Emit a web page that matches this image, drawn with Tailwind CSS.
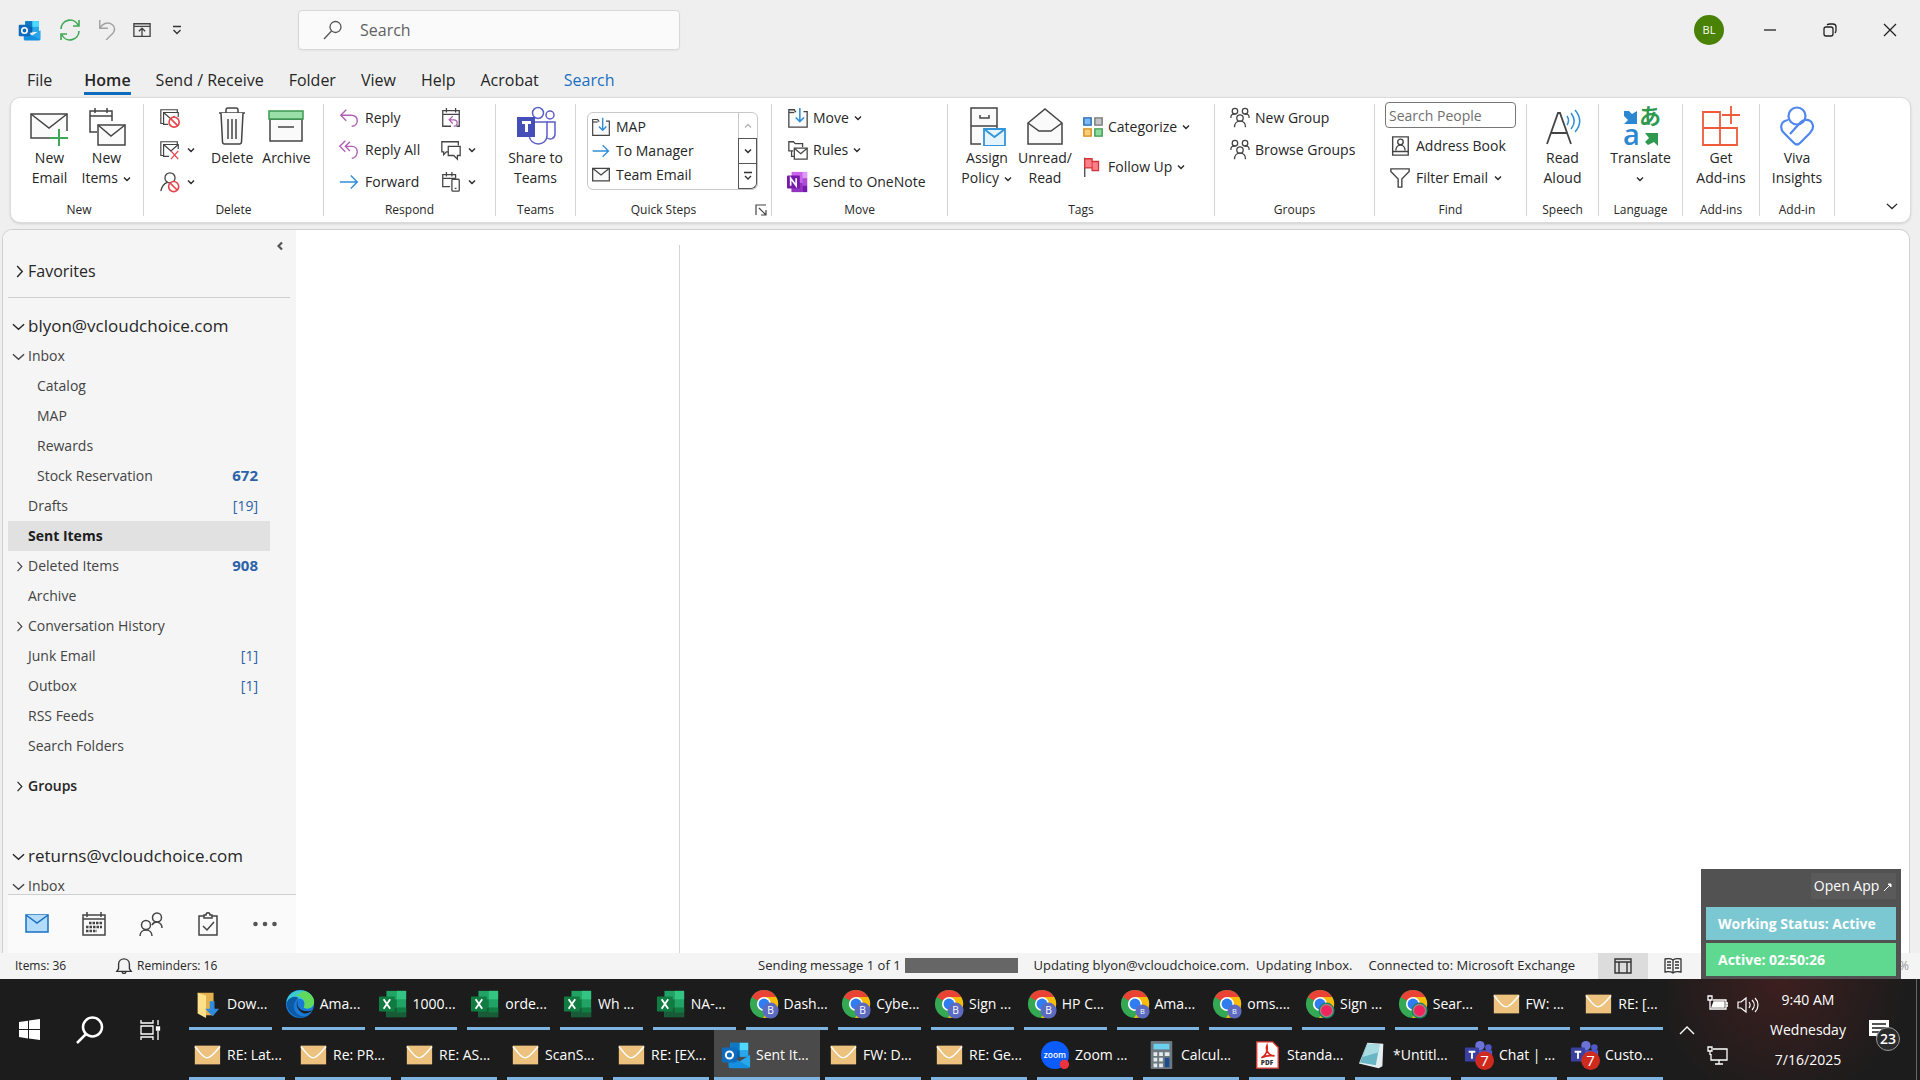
<!DOCTYPE html>
<html lang="en">
<head>
    <meta charset="UTF-8">
    <meta name="viewport" content="width=device-width, initial-scale=1.0">
    <title>Sent Items - Outlook</title>
    <script src="https://cdn.jsdelivr.net/npm/@tailwindcss/browser@4"></script>
</head>
<body class="flex h-screen flex-col overflow-hidden bg-[#efefef] font-['Open_Sans','Noto_Sans',sans-serif] text-sm text-[#262626]">

    <!-- Icon sprite -->
    <svg class="hidden" xmlns="http://www.w3.org/2000/svg">
        <symbol id="chev" viewBox="0 0 10 10" fill="none" stroke="currentColor" stroke-width="1.4"><path d="M2 3.5 5 6.5 8 3.5"/></symbol>
        <symbol id="chevWide" viewBox="0 0 14 14" fill="none" stroke="currentColor" stroke-width="1.5"><path d="M1 4.500 7 10l6-5.500"/></symbol>
        <symbol id="outlook" viewBox="0 0 32 32">
            <path d="M10 3h19v14H10z" fill="#28a8ea"/><path d="M10 3h10v8H10z" fill="#0f78c4"/><path d="M20 3h9v8h-9z" fill="#50d9ff"/><path d="M20 11h9v7h-9z" fill="#28a8ea"/><path d="M10 11h10v8H10z" fill="#0a5fa8"/>
            <path d="M8 16l12 7 11-7v12a2 2 0 0 1-2 2H10a2 2 0 0 1-2-2z" fill="#1490df"/><path d="M20 23l11 6V16z" fill="#28a8ea"/>
            <rect x="1" y="8" width="16" height="16" rx="1.500" fill="#0f6cbd"/><circle cx="9" cy="16" r="3.800" fill="none" stroke="#fff" stroke-width="2.200"/>
        </symbol>
        <symbol id="newmail" viewBox="0 0 40 40" fill="none" stroke="#444" stroke-width="1.500"><path d="M24 32H2V8h36v17" fill="#fafafa"/><path d="M2 8l18 14L38 8"/><path d="M30 23v18M21 32h18" stroke="#3fa856" stroke-width="2"/></symbol>
        <symbol id="newitems" viewBox="0 0 40 40" fill="none" stroke="#444" stroke-width="1.500"><path d="M10 26H3V5h22v10M3 10h22M8 2v5M20 2v5"/><path d="M11 19h27v20H11z" fill="#fafafa"/><path d="M11 19l13 11 14-11"/></symbol>
        <symbol id="ignore" viewBox="0 0 24 24" fill="none" stroke="#444" stroke-width="1.300"><path d="M5 18H2V3h18v3"/><path d="M10 19H5V6h16v5M5 6l8 7 4-3"/><circle cx="16.500" cy="16.500" r="5.500" fill="#fff" stroke="#e5484d" stroke-width="1.800"/><path d="M12.500 12.500l8 8" stroke="#e5484d" stroke-width="1.800"/></symbol>
        <symbol id="junkx" viewBox="0 0 24 24" fill="none" stroke="#444" stroke-width="1.300"><path d="M5 18H2V3h18v3"/><path d="M11 19H5V6h16v5M5 6l8 7 8-7"/><path d="M13 13l8 9M21 13l-8 9" stroke="#e5484d" stroke-width="1.500"/></symbol>
        <symbol id="block" viewBox="0 0 24 24" fill="none" stroke="#444" stroke-width="1.400"><circle cx="12" cy="7.500" r="5.500"/><path d="M2 22c1-5 3-8 7-9.500"/><circle cx="16" cy="17" r="5.500" fill="#fff" stroke="#e5484d" stroke-width="1.800"/><path d="M12 13l8 8" stroke="#e5484d" stroke-width="1.800"/></symbol>
        <symbol id="trash" viewBox="0 0 40 40" fill="none" stroke="#444" stroke-width="1.500"><path d="M7 7h26M14 7V4q0-2 2-2h8q2 0 2 2v3"/><path d="M9 7l1.500 29q.2 2 2 2h15q1.800 0 2-2L31 7" fill="#fafafa"/><path d="M16 13v20M20 13v20M24 13v20"/></symbol>
        <symbol id="archive" viewBox="0 0 40 40" fill="none" stroke="#444" stroke-width="1.500"><path d="M4 13h32v22H4z" fill="#fafafa"/><path d="M3 5h34v8H3z" fill="#9adfa8" stroke="#3c9a50"/><path d="M12 21h16"/></symbol>
        <symbol id="reply" viewBox="0 0 24 24" fill="none" stroke="#b05fb5" stroke-width="1.500"><path d="M9 3 3 9l6 6M3 9h11c5 0 7 3 7 6s-2 6-6 6"/></symbol>
        <symbol id="replyall" viewBox="0 0 24 24" fill="none" stroke="#b05fb5" stroke-width="1.500"><path d="M8 2 2 8l6 6M13 3 8 8l5 5M8 8h7c4 0 6 3 6 6s-2 7-6 7"/></symbol>
        <symbol id="arrow" viewBox="0 0 24 24" fill="none" stroke="#2f8fd8" stroke-width="1.600"><path d="M2 12h19M14 5l7 7-7 7"/></symbol>
        <symbol id="meeting" viewBox="0 0 24 24" fill="none" stroke="#444" stroke-width="1.400"><path d="M12 21H3V4h18v17h-3M3 8h18M7 1v5M17 1v5"/><path d="M14 10l-4 4 4 4M10 14h5c5 0 5 7 0 7" stroke="#b05fb5"/></symbol>
        <symbol id="im" viewBox="0 0 24 24" fill="none" stroke="#444" stroke-width="1.400"><path d="M9 14H7l-3 3v-3H2V3h18v4"/><path d="M9 8h13v10h-3v4l-4-4H9z" fill="#fff"/></symbol>
        <symbol id="share" viewBox="0 0 24 24" fill="none" stroke="#444" stroke-width="1.400"><path d="M11 17H3V4h14v4M3 8h14M7 1v5M13 1v5"/><rect x="13" y="9" width="8" height="13" rx="1" fill="#fff"/><path d="M16 19h2"/></symbol>
        <symbol id="teams" viewBox="0 0 40 40" fill="none" stroke="#5b5fc7" stroke-width="1.500"><circle cx="22" cy="7" r="5.500"/><circle cx="34" cy="9" r="4"/><path d="M14 16h17v13c0 12-17 12-18 0z" fill="#fff"/><path d="M31 16h8v12c0 5-5 6-8 4"/><rect x="1" y="11" width="18" height="20" fill="#464eb8" stroke="none"/><path d="M6 16.500h9M10.500 16v10" stroke="#fff" stroke-width="3"/></symbol>
        <symbol id="moveto" viewBox="0 0 24 24" fill="none" stroke="#444" stroke-width="1.400"><path d="M10 5h-1L8 3H2v19h20V5h-4" fill="#fafafa"/><path d="M2 6h6" /><path d="M14 1v15M9.500 11.500 14 16l4.500-4.500" stroke="#2f8fd8" stroke-width="1.700"/></symbol>
        <symbol id="mail" viewBox="0 0 24 24" fill="none" stroke="#444" stroke-width="1.500"><path d="M2 4h20v15H2z" fill="#fafafa"/><path d="M2 4l10 8 10-8"/></symbol>
        <symbol id="rules" viewBox="0 0 24 24" fill="none" stroke="#444" stroke-width="1.400"><path d="M7 13H2V3h5l2 2h8v4"/><path d="M5 13v6h3M8 10h14v12H8z" fill="#fff"/><path d="M8 10l7 6 7-6"/></symbol>
        <symbol id="onenote" viewBox="0 0 24 24"><path d="M5 1h17v22H5z" fill="#ca64ea"/><path d="M17 1h5v7h-5z" fill="#dc9cf5"/><path d="M17 8h5v8h-5z" fill="#ae4bd5"/><path d="M5 13h12v10H5z" fill="#9332bf"/><path d="M17 16h5v7h-5z" fill="#7719aa"/><rect x="0" y="5" width="14" height="14" rx="1" fill="#7719aa"/><path d="M4 16V8l6 8V8" fill="none" stroke="#fff" stroke-width="1.800"/></symbol>
        <symbol id="policy" viewBox="0 0 40 40" fill="none" stroke="#444" stroke-width="1.500"><path d="M14 38H4V2h26v22M4 20h26M13 9v3h9V9" fill="#fafafa"/><path d="M17 23h21v17H17z" fill="#e5f3fd" stroke="#3394da" stroke-width="1.800"/><path d="M17 23l10.500 8L38 23" stroke="#3394da" stroke-width="1.800"/></symbol>
        <symbol id="unread" viewBox="0 0 40 40" fill="none" stroke="#444" stroke-width="1.500"><path d="M3 17 20 3l17 14v21H3z" fill="#fafafa"/><path d="M3 17l11 8h12l11-8"/></symbol>
        <symbol id="categ" viewBox="0 0 24 24" stroke-width="1.500"><path d="M2 2h8v8H2z" fill="#7cb8f2" stroke="#2368b0"/><path d="M14 2h8v8h-8z" fill="#c4c4c4" stroke="#777"/><path d="M2 14h8v8H2z" fill="#f8cd78" stroke="#d48a1a"/><path d="M14 14h8v8h-8z" fill="#8fdb9d" stroke="#3a9a4c"/></symbol>
        <symbol id="flag" viewBox="0 0 24 24" fill="none"><path d="M3 2v21" stroke="#444" stroke-width="1.400"/><path d="M3 3h8v3h7v10h-7v-3H3z" fill="#ff8088" stroke="#d13438" stroke-width="1.400"/><path d="M11 6v7" stroke="#d13438"/></symbol>
        <symbol id="people3" viewBox="0 0 24 24" fill="none" stroke="#444" stroke-width="1.400"><circle cx="6.500" cy="4.500" r="3"/><circle cx="17.500" cy="4.500" r="3"/><circle cx="12" cy="12" r="3.500"/><path d="M2 12c0-4 2-5 5-4M22 12c0-4-2-5-5-4M6 22c0-4 2-6.500 6-6.500s6 2.500 6 6.500"/></symbol>
        <symbol id="addrbook" viewBox="0 0 24 24" fill="none" stroke="#444" stroke-width="1.500"><path d="M4 2h17v20H4zM4 18h17"/><circle cx="12.500" cy="7.500" r="3"/><path d="M7.500 17c0-8 10-8 10 0"/></symbol>
        <symbol id="funnel" viewBox="0 0 24 24" fill="none" stroke="#444" stroke-width="1.500"><path d="M2 2h20v3l-8 8v9h-4v-9L2 5z"/></symbol>
        <symbol id="aloud" viewBox="0 0 40 40" fill="none"><path d="M4 38 15 7h2l11 31M8 27h16" stroke="#444" stroke-width="1.800"/><g stroke="#2f8fd8" stroke-width="1.500"><path d="M24 10c2 3 2 6 0 9M28 7c4 5 4 11 0 16M32 4c6 7 6 15 0 22"/></g></symbol>
        <symbol id="translate" viewBox="0 0 40 40"><path d="M3 5h5l3 3 5-3v13H3l4-4-4-4z" fill="#2b88d0"/><path d="M24 27h13v13l-4-4-6 3-3-3 4-4z" fill="#2f9a4f"/><text x="18" y="18" font-family="Noto Sans CJK JP, sans-serif" font-size="22" font-weight="700" fill="#2f9a4f">あ</text><text x="2" y="39" font-family="Open Sans, sans-serif" font-size="29" font-weight="600" fill="#2b88d0">a</text></symbol>
        <symbol id="addins" viewBox="0 0 40 40" fill="none" stroke="#ee5a3a" stroke-width="1.800"><path d="M2 6h17v33H2zM2 22h34v17H2M30 0v18M21 9h18"/></symbol>
        <symbol id="viva" viewBox="0 0 40 40" fill="none" stroke="#4f86f0" stroke-width="2.200"><circle cx="20" cy="10" r="8.500"/><path d="M11 14c-7 1-9 8-4 13l10 10c2 2 4 2 6 0l10-10c6-6 2-14-5-13-3 0-4 2-6 4l-9 10"/></symbol>
        <symbol id="excel" viewBox="0 0 32 32"><path d="M9 2h21v28H9z" fill="#21a366"/><path d="M20 2h10v9H20z" fill="#33c481"/><path d="M9 11h11v9H9z" fill="#107c41"/><path d="M9 20h21v10H9z" fill="#185c37"/><path d="M20 20h10v5H20z" fill="#107c41"/><rect x="1" y="8" width="17" height="16" rx="1" fill="#107c41"/><path d="M6 11l7 10M13 11 6 21" stroke="#fff" stroke-width="2"/></symbol>
        <symbol id="envelope" viewBox="0 0 32 32"><path d="M3 6h27v20H3z" fill="#ecc27e"/><path d="M3 7c5 5 8 12 13 12S25 12 30 7" fill="none" stroke="#fff" stroke-width="1.500"/></symbol>
        <symbol id="chrome" viewBox="0 0 32 32"><circle cx="16" cy="16" r="15" fill="#34a853"/><path d="M16 16 3 8.500A15 15 0 0 1 29 8.500z" fill="#ea4335"/><path d="M29 8.500A15 15 0 0 1 15 31l7-12-6-10.500z" fill="#fbbc05"/><circle cx="16" cy="16" r="7.500" fill="#fff"/><circle cx="16" cy="16" r="5.800" fill="#2f7df0"/></symbol>
        <symbol id="chromeB" viewBox="0 0 32 32"><use href="#chrome"/><circle cx="23" cy="23" r="8.500" fill="#5c6bc0"/><text x="23" y="27" font-family="Open Sans, sans-serif" font-size="11" fill="#fff" text-anchor="middle">B</text></symbol>
        <symbol id="chromeSmallB" viewBox="0 0 32 32"><use href="#chrome"/><circle cx="24" cy="24" r="7.500" fill="#5c6bc0"/><text x="24" y="27" font-family="Open Sans, sans-serif" font-size="8" fill="#fff" text-anchor="middle">B</text></symbol>
        <symbol id="chromeR" viewBox="0 0 32 32"><use href="#chrome"/><circle cx="23" cy="23" r="8.500" fill="#12836d"/><circle cx="23" cy="23" r="6.500" fill="#f0245e" stroke="#a87f7f" stroke-width="1.500"/></symbol>
        <symbol id="edge" viewBox="0 0 32 32"><circle cx="16" cy="16" r="15" fill="#1a78d6"/><path d="M2 12C6-3 30-2 31 14c0 6-6 8-11 6 3-6-1-10-6-10-5 0-10 2-12 6z" fill="#3ccbd0"/><path d="M20 2c8 2 12 8 11 13-1 5-7 7-11 5 3-7-1-12-8-13z" fill="#62d85c"/><path d="M11 13c-5 8 2 18 13 16C13 34 1 25 2 14c2-5 8-7 12-5z" fill="#0c59a4"/><path d="M14 12c-3 6 2 14 15 11-3 3-8 4-11 2-5-3-7-9-4-13z" fill="#1c1c1c"/></symbol>
        <symbol id="download" viewBox="0 0 32 32"><path d="M6 4h17v24H11z" fill="#e2b04c"/><path d="M6 4l9 3v24l-9-5z" fill="#ffe08a"/><path d="M19 13h5v8h5l-7 8-8-8h5z" fill="#2f8be0"/></symbol>
        <symbol id="zoomapp" viewBox="0 0 32 32"><circle cx="16" cy="16" r="15" fill="#0b5cff"/><text x="16" y="19" font-family="Open Sans, sans-serif" font-size="9" font-weight="600" fill="#fff" text-anchor="middle">zoom</text><circle cx="26" cy="26" r="5" fill="#f0323c"/></symbol>
        <symbol id="calc" viewBox="0 0 32 32"><rect x="5" y="1" width="23" height="30" rx="1" fill="#6d7880"/><path d="M8 4h17v6H8z" fill="#6cd0ee"/><path d="M8 13h4v4H8zM14 13h4v4h-4zM20 13h5v4h-5zM8 19h4v4H8zM14 19h4v4h-4zM8 25h4v4H8zM14 25h4v4h-4z" fill="#e6eaed"/><path d="M20 19h5v10h-5z" fill="#1d4c8c"/></symbol>
        <symbol id="pdf" viewBox="0 0 32 32"><path d="M5 2h17l6 6v22H5z" fill="#fff" stroke="#d93831" stroke-width="1.500"/><path d="M10 19c5-2 7-8 6-13-2 5 2 11 8 11-5-1-10 0-14 2z" fill="none" stroke="#d9261c" stroke-width="1.800"/><text x="16" y="27" font-family="Open Sans, sans-serif" font-size="7" font-weight="800" fill="#333" text-anchor="middle">PDF</text></symbol>
        <symbol id="notepad" viewBox="0 0 32 32"><path d="M10 3l17 1-1 24-4 2L1 25z" fill="#e4eef0"/><path d="M10 4l13 1-4 22L2 24z" fill="#69b7c4"/><path d="M10 4l13 1-1 8-17 5z" fill="#a8dbe2"/></symbol>
        <symbol id="teamsapp" viewBox="0 0 32 32"><circle cx="17" cy="6" r="5" fill="#6b73d8"/><circle cx="26" cy="8" r="3.500" fill="#5059c9"/><path d="M10 11h20v9c0 9-17 12-19 0z" fill="#5059c9"/><rect x="1" y="8" width="15" height="15" rx="1" fill="#3940a0"/><path d="M5 12.500h7M8.500 12v8" stroke="#fff" stroke-width="2"/><circle cx="22" cy="22" r="10" fill="#cf2a1e"/><text x="22" y="28" font-family="Open Sans, sans-serif" font-size="16" fill="#fff" text-anchor="middle">7</text></symbol>
    </svg>

    <!-- Title bar -->
    <header class="grid h-[60px] shrink-0 grid-cols-[298px_382px_1fr] items-center">
        <div class="flex items-center gap-4 pl-[18px]">
            <svg class="size-[23px]"><use href="#outlook"/></svg>
            <button aria-label="Send/Receive" class="ml-0.5"><svg class="size-[22px]" viewBox="0 0 22 22" fill="none" stroke="#3fa856" stroke-width="1.600"><path d="M2 10a9 9 0 0 1 17-4M20 12a9 9 0 0 1-17 4M20 1v6h-6M2 21v-6h6"/></svg></button>
            <button aria-label="Undo"><svg class="size-[20px]" viewBox="0 0 22 22" fill="none" stroke="#a3a3a3" stroke-width="1.600"><path d="M3 0v9h9M3 9c3-5 8-7 12-5 6 3 5 9 1 12l-6 6"/></svg></button>
            <button aria-label="Ribbon"><svg class="size-[18px]" viewBox="0 0 20 20" fill="none" stroke="#444" stroke-width="1.500"><path d="M1 3h18v14H1zM1 6h18M10 17V8M6.500 11.500 10 8l3.500 3.500"/></svg></button>
            <button aria-label="Customize" class="ml-1"><svg class="size-3" viewBox="0 0 12 12" fill="none" stroke="#333" stroke-width="1.400"><path d="M2 2.500h8M2.500 6 6 9.500 9.500 6"/></svg></button>
        </div>
        <label class="flex h-10 items-center gap-[17px] rounded border border-[#d8d8d8] bg-[#fafafa] px-6 shadow-xs">
            <svg class="size-5 shrink-0" viewBox="0 0 20 20" fill="none" stroke="#555" stroke-width="1.300"><circle cx="12.500" cy="7" r="5.500"/><path d="M8.500 11 1 19"/></svg>
            <input type="text" placeholder="Search" aria-label="Search" class="w-full bg-transparent text-base outline-none placeholder:text-[#616161]">
        </label>
        <div class="flex items-center justify-end gap-[42px] pr-[21px]">
            <button class="mr-[-5px] size-[30px] rounded-full bg-[#498205] text-[11px] text-white">BL</button>
            <button aria-label="Minimize"><svg class="size-[18px]" viewBox="0 0 18 18" stroke="#222" stroke-width="1.300"><path d="M3 9h12"/></svg></button>
            <button aria-label="Restore"><svg class="size-[18px]" viewBox="0 0 18 18" fill="none" stroke="#222" stroke-width="1.300"><rect x="3" y="6" width="9" height="9" rx="2"/><path d="M6 4q1-1 3-1h3q3 0 3 3v3q0 2-1 3"/></svg></button>
            <button aria-label="Close"><svg class="size-[18px]" viewBox="0 0 18 18" stroke="#222" stroke-width="1.300"><path d="M3 3l12 12M15 3 3 15"/></svg></button>
        </div>
    </header>

    <!-- Ribbon tabs -->
    <nav class="flex h-[37px] shrink-0 items-start gap-[25px] pl-[27px] text-base leading-[40px] [&>a]:h-[35px]">
        <a href="#" class="mr-[7px]">File</a>
        <a href="#" class="border-b-[3px] border-[#0f6cbd] font-semibold">Home</a>
        <a href="#">Send / Receive</a>
        <a href="#">Folder</a>
        <a href="#">View</a>
        <a href="#">Help</a>
        <a href="#">Acrobat</a>
        <a href="#" class="text-[#1a6fc0]">Search</a>
    </nav>

    <!-- Ribbon -->
    <section class="mr-[9px] ml-[10px] flex h-[126px] shrink-0 rounded-[10px] border border-[#dcdcdc] bg-white py-[6px] shadow [&>div]:flex [&>div]:shrink-0 [&>div]:flex-col [&>div]:justify-between [&>div]:border-r [&>div]:border-[#d4d4d4] [&_button]:whitespace-nowrap [&_h2]:text-center [&_h2]:text-xs [&_h2]:leading-3">
        <div class="w-[133px]">
            <div class="flex justify-center gap-[12px] pl-[7px] leading-5">
                <button class="flex flex-col items-center gap-0.5 pt-0.5"><svg class="size-10 overflow-visible"><use href="#newmail"/></svg><span>New<br>Email</span></button>
                <button class="flex flex-col items-center gap-0.5 pt-0.5"><svg class="size-10"><use href="#newitems"/></svg><span>New<br>Items <svg class="inline size-2.5"><use href="#chev"/></svg></span></button>
            </div>
            <h2 class="pl-1">New</h2>
        </div>
        <div class="w-[180px]">
            <div class="flex pl-[15px] leading-5">
                <div class="flex w-[47px] flex-col gap-1">
                    <button aria-label="Ignore" class="flex h-7 items-center"><svg class="size-[22px]"><use href="#ignore"/></svg></button>
                    <button aria-label="Clean Up" class="flex h-7 items-center gap-[5px]"><svg class="size-[22px]"><use href="#junkx"/></svg><svg class="size-2.5"><use href="#chev"/></svg></button>
                    <button aria-label="Junk" class="flex h-7 items-center gap-[5px]"><svg class="size-[22px]"><use href="#block"/></svg><svg class="size-2.5"><use href="#chev"/></svg></button>
                </div>
                <div class="flex gap-[9px] pl-[5px]">
                    <button class="flex flex-col items-center gap-0.5 pt-0.5"><svg class="size-10"><use href="#trash"/></svg>Delete</button>
                    <button class="flex flex-col items-center gap-0.5 pt-0.5"><svg class="size-10"><use href="#archive"/></svg>Archive</button>
                </div>
            </div>
            <h2>Delete</h2>
        </div>
        <div class="w-[172px]">
            <div class="flex pl-[14px]">
                <div class="flex w-[102px] flex-col gap-1">
                    <button class="flex h-7 items-center gap-[5px]"><svg class="size-[22px]"><use href="#reply"/></svg>Reply</button>
                    <button class="flex h-7 items-center gap-[5px]"><svg class="size-[22px]"><use href="#replyall"/></svg>Reply All</button>
                    <button class="flex h-7 items-center gap-[5px]"><svg class="size-[22px]"><use href="#arrow"/></svg>Forward</button>
                </div>
                <div class="flex flex-col gap-1">
                    <button aria-label="Meeting" class="flex h-7 items-center"><svg class="size-[22px]"><use href="#meeting"/></svg></button>
                    <button aria-label="IM" class="flex h-7 items-center gap-[5px]"><svg class="size-[22px]"><use href="#im"/></svg><svg class="size-2.5"><use href="#chev"/></svg></button>
                    <button aria-label="More" class="flex h-7 items-center gap-[5px]"><svg class="size-[22px]"><use href="#share"/></svg><svg class="size-2.5"><use href="#chev"/></svg></button>
                </div>
            </div>
            <h2>Respond</h2>
        </div>
        <div class="w-[80px]">
            <button class="flex flex-col items-center gap-0.5 pt-0.5 leading-5"><svg class="size-10"><use href="#teams"/></svg><span>Share to<br>Teams</span></button>
            <h2>Teams</h2>
        </div>
        <div class="w-[196px]">
            <div class="mt-2 ml-[11px] flex h-[78px] w-[171px] rounded-md border border-[#c8c8c8]">
                <div class="flex flex-1 flex-col justify-center pl-[3px]">
                    <button class="flex h-6 items-center gap-[5px]"><svg class="size-5"><use href="#moveto"/></svg>MAP</button>
                    <button class="flex h-6 items-center gap-[5px]"><svg class="size-5"><use href="#arrow"/></svg>To Manager</button>
                    <button class="flex h-6 items-center gap-[5px]"><svg class="size-5"><use href="#mail"/></svg>Team Email</button>
                </div>
                <div class="grid w-[19px] grid-rows-3 [&>button]:flex [&>button]:items-center [&>button]:justify-center">
                    <button aria-label="Up" class="border-l border-[#c8c8c8] text-[#b5b5b5]"><svg class="size-2.5 rotate-180"><use href="#chev"/></svg></button>
                    <button aria-label="Down" class="border border-[#555]"><svg class="size-2.5"><use href="#chev"/></svg></button>
                    <button aria-label="Expand" class="rounded-br-md border border-t-0 border-[#555]"><svg class="size-3" viewBox="0 0 12 12" fill="none" stroke="#333" stroke-width="1.400"><path d="M2 2.500h8M3 6l3 3 3-3"/></svg></button>
                </div>
            </div>
            <div class="relative"><h2 class="pr-[20px]">Quick Steps</h2><button aria-label="Quick Steps options" class="absolute right-[4px] top-0"><svg class="size-3" viewBox="0 0 12 12" fill="none" stroke="#444" stroke-width="1.200"><path d="M1 11V1h10M4 4l7 7M11 6v5H6"/></svg></button></div>
        </div>
        <div class="w-[176px]">
            <div class="flex flex-col gap-1 pl-[15px]">
                <button class="flex h-7 items-center gap-1"><svg class="size-[22px]"><use href="#moveto"/></svg>Move <svg class="size-2.5"><use href="#chev"/></svg></button>
                <button class="flex h-7 items-center gap-1"><svg class="size-[22px]"><use href="#rules"/></svg>Rules <svg class="size-2.5"><use href="#chev"/></svg></button>
                <button class="flex h-7 items-center gap-1"><svg class="size-[22px]"><use href="#onenote"/></svg>Send to OneNote</button>
            </div>
            <h2>Move</h2>
        </div>
        <div class="w-[267px]">
            <div class="flex pl-[11px] leading-5">
                <button class="flex w-[56px] flex-col items-center gap-0.5 pt-0.5"><svg class="size-10"><use href="#policy"/></svg><span>Assign<br>Policy <svg class="inline size-2.5"><use href="#chev"/></svg></span></button>
                <button class="flex w-[60px] flex-col items-center gap-0.5 pt-0.5"><svg class="size-10"><use href="#unread"/></svg><span>Unread/<br>Read</span></button>
                <div class="flex flex-col gap-3 pt-[9px] pl-[7px]">
                    <button class="flex h-7 items-center gap-1"><svg class="size-[22px]"><use href="#categ"/></svg>Categorize <svg class="size-2.5"><use href="#chev"/></svg></button>
                    <button class="flex h-7 items-center gap-1"><svg class="size-[22px]"><use href="#flag"/></svg>Follow Up <svg class="size-2.5"><use href="#chev"/></svg></button>
                </div>
            </div>
            <h2>Tags</h2>
        </div>
        <div class="w-[160px]">
            <div class="flex flex-col gap-1 pl-[14px]">
                <button class="flex h-7 items-center gap-1"><svg class="size-[22px]"><use href="#people3"/></svg>New Group</button>
                <button class="flex h-7 items-center gap-1"><svg class="size-[22px]"><use href="#people3"/></svg>Browse Groups</button>
            </div>
            <h2>Groups</h2>
        </div>
        <div class="w-[152px]">
            <div class="flex flex-col gap-1 px-[10px]">
                <input type="text" placeholder="Search People" aria-label="Search People" class="-mt-0.5 h-[26px] w-full rounded border border-[#777] px-[3px] placeholder:text-[#707070]">
                <button class="flex h-7 items-center gap-[5px] pl-1"><svg class="size-[22px]"><use href="#addrbook"/></svg>Address Book</button>
                <button class="flex h-7 items-center gap-[5px] pl-1"><svg class="size-[22px]"><use href="#funnel"/></svg>Filter Email <svg class="size-2.5"><use href="#chev"/></svg></button>
            </div>
            <h2>Find</h2>
        </div>
        <div class="w-[72px]">
            <button class="flex flex-col items-center gap-0.5 pt-0.5 leading-5"><svg class="size-10"><use href="#aloud"/></svg><span>Read<br>Aloud</span></button>
            <h2>Speech</h2>
        </div>
        <div class="w-[84px]">
            <button class="flex flex-col items-center gap-0.5 pt-0.5 leading-5"><svg class="size-10"><use href="#translate"/></svg><span>Translate<br><svg class="inline size-2.5"><use href="#chev"/></svg></span></button>
            <h2>Language</h2>
        </div>
        <div class="w-[77px]">
            <button class="flex flex-col items-center gap-0.5 pt-0.5 leading-5"><svg class="size-10"><use href="#addins"/></svg><span>Get<br>Add-ins</span></button>
            <h2>Add-ins</h2>
        </div>
        <div class="w-[75px]">
            <button class="flex flex-col items-center gap-0.5 pt-0.5 leading-5"><svg class="size-10"><use href="#viva"/></svg><span>Viva<br>Insights</span></button>
            <h2>Add-in</h2>
        </div>
        <button aria-label="Collapse ribbon" class="mt-auto mr-[12px] mb-[4px] ml-auto"><svg class="size-3"><use href="#chevWide"/></svg></button>
    </section>

    <!-- Folder pane, message list and reading pane -->
    <main class="mt-1.5 mr-[10px] ml-[2px] flex min-h-0 flex-1 overflow-hidden rounded-t-[10px] border border-b-0 border-[#cfcfcf] bg-white">
        <aside class="flex w-[293px] shrink-0 flex-col bg-[#f5f5f5] pl-[5px]">
            <div class="min-h-0 flex-1 overflow-hidden">
                <button aria-label="Collapse pane" class="mt-[10px] mr-[10px] ml-auto block"><svg class="size-3" viewBox="0 0 12 12" fill="none" stroke="#555" stroke-width="2.200"><path d="M8 2.500 4.500 6 8 9.500"/></svg></button>
                <a href="#" class="mt-1 flex h-[30px] items-center text-base"><svg class="mr-0.5 ml-[5px] size-[13px] -rotate-90"><use href="#chevWide"/></svg>Favorites</a>
                <hr class="mt-[11px] mr-[6px] mb-[13px] border-[#cfcfcf]">
                <div id="folders"></div>
            </div>
            <div class="flex h-[59px] shrink-0 items-center border-t border-[#cfcfcf] bg-[#fafafa] [&>button]:flex [&>button]:w-[57px] [&>button]:justify-center">
                <button aria-label="Mail"><svg class="size-6" viewBox="0 0 24 24" fill="#b3dcfa" stroke="#1a6fc0" stroke-width="1.500"><path d="M1 3h22v17H1z"/><path d="M1 3l11 8 11-8"/></svg></button>
                <button aria-label="Calendar"><svg class="size-6" viewBox="0 0 24 24" fill="none" stroke="#444" stroke-width="1.500"><path d="M1 3h22v20H1zM1 7h22M5 0v5M19 0v5"/><path d="M7 11h13M4 15h16M4 19h11" stroke-width="2.500" stroke-dasharray="2.500 1"/></svg></button>
                <button aria-label="People"><svg class="size-6" viewBox="0 0 24 24" fill="none" stroke="#444" stroke-width="1.500"><circle cx="7" cy="13" r="4.500"/><circle cx="18" cy="5.500" r="4.500"/><path d="M1 24c0-8 12-8 12 0M13 13c3-5 10-3 10 3"/></svg></button>
                <button aria-label="Tasks"><svg class="size-6" viewBox="0 0 24 24" fill="none" stroke="#444" stroke-width="1.500"><path d="M8 4H3v19h18V4h-5M8 6V3h2c0-3 4-3 4 0h2v3z"/><path d="M7 14l4 4 7-8"/></svg></button>
                <button aria-label="More"><svg class="size-6" viewBox="0 0 24 24" fill="#555"><circle cx="2.500" cy="12" r="2.300"/><circle cx="12" cy="12" r="2.300"/><circle cx="21.500" cy="12" r="2.300"/></svg></button>
            </div>
        </aside>
        <section class="mt-[15px] w-[384px] shrink-0 border-r border-[#d4d4d4]"></section>
        <section class="flex-1"></section>
    </main>

    <!-- Status bar -->
    <footer class="flex h-[26px] shrink-0 items-center bg-[#f4f4f4] pl-[15px] text-xs whitespace-nowrap">
        <span class="w-[100px]">Items: 36</span>
        <span class="flex items-center gap-1"><svg class="size-[18px]" viewBox="0 0 20 20" fill="none" stroke="#333" stroke-width="1.500"><path d="M2 16h16l-2-3V8c0-8-12-8-12 0v5zM8 16c0 3 4 3 4 0"/></svg>Reminders: 16</span>
        <div class="ml-auto flex items-center gap-4 text-[13px]">
            <span class="flex items-center gap-1">Sending message 1 of 1 <i class="h-[15px] w-[113px] bg-[#666]"></i></span>
            <span>Updating blyon@vcloudchoice.com.&nbsp; Updating Inbox.</span>
            <span>Connected to: Microsoft Exchange</span>
        </div>
        <button aria-label="Normal view" class="ml-[23px] flex h-full w-[50px] items-center justify-center bg-[#dcdcdc]"><svg class="size-[18px]" viewBox="0 0 18 18" fill="none" stroke="#333" stroke-width="1.400"><path d="M1 2h16v14H1zM1 5h16M5 5v11M13 5v11"/></svg></button>
        <button aria-label="Reading view" class="flex h-full w-[50px] items-center justify-center"><svg class="size-[18px]" viewBox="0 0 18 18" fill="none" stroke="#333" stroke-width="1.300"><path d="M9 3c-2-1.500-5-1.500-8-1v13c3-.5 6-.5 8 1 2-1.500 5-1.500 8-1V2c-3-.5-6-.5-8 1zM9 3v13M3 5h4M3 8h4M3 11h4M11 5h4M11 8h4M11 11h4"/></svg></button>
        <span class="w-[222px] pr-[11px] text-right text-[#999]">100%</span>
    </footer>

    <!-- Taskbar -->
    <footer class="flex h-[101px] shrink-0 bg-[#1c1c1c] text-white">
        <div class="flex w-[184px] items-center pl-[19px]">
            <button aria-label="Start"><svg class="size-[21px]" viewBox="0 0 21 21" fill="#fff"><path d="M0 3l9-1.300V10H0zM10 1.500 21 0v10H10zM0 11h9v8.500L0 18zM10 11h11v10l-11-1.500z"/></svg></button>
            <button aria-label="Search" class="ml-9"><svg class="size-7" viewBox="0 0 28 28" fill="none" stroke="#fff" stroke-width="2.500"><circle cx="16.500" cy="11" r="9.500"/><path d="M10 18 1 27"/></svg></button>
            <button aria-label="Task View" class="ml-[35px]"><svg class="size-[22px]" viewBox="0 0 22 22" fill="none" stroke="#fff" stroke-width="1.300"><path d="M2 1v3h12V1M2 7h12v8H2zM2 21v-3h12v3M19 1v5M19 12v9"/><path d="M17.500 8h3v3h-3z" fill="#fff"/></svg></button>
        </div>
        <div class="grid min-w-0 flex-1 grid-rows-[51px_50px]">
            <div id="rowTop" class="grid grid-cols-16"></div>
            <div id="rowBottom" class="grid grid-cols-14"></div>
        </div>
        <div class="flex w-[252px] items-center bg-[radial-gradient(circle_at_45%_0%,#3d1f1f,#1c1c1c_75%)]">
            <button aria-label="Hidden icons" class="ml-[11px]"><svg class="size-4" viewBox="0 0 16 16" fill="none" stroke="#fff" stroke-width="1.400"><path d="M1 12l7-7 7 7"/></svg></button>
            <div class="ml-3 grid w-[52px] grid-cols-2 gap-x-2 gap-y-[29px]">
                <svg class="size-[21px]" viewBox="0 0 21 21" fill="none" stroke="#fff" stroke-width="1.300"><path d="M6 6h13v9H3v-4"/><path d="M7 8h10v5H5z" fill="#fff"/><path d="M19 9h2v3h-2M1 2h4v4H1zM3 6v5"/></svg>
                <svg class="size-[22px]" viewBox="0 0 22 22" fill="none" stroke="#fff" stroke-width="1.200"><path d="M1 8h3l5-4v14l-5-4H1zM12 8c1.500 2 1.500 4 0 6M15 6c3 3 3 7 0 10M18 4c4 4 4 10 0 14"/></svg>
                <svg class="size-[21px]" viewBox="0 0 21 21" fill="none" stroke="#fff" stroke-width="1.300"><path d="M6 4h14v11H4V9M8 19h8M12 15v4M1 2h4v4H1zM3 6v4"/></svg>
            </div>
            <div class="ml-[7px] w-[84px] text-center leading-[30px]">9:40 AM<br>Wednesday<br>7/16/2025</div>
            <button aria-label="Notifications" class="relative ml-[18px]"><svg class="size-[22px]" viewBox="0 0 22 22"><path d="M1 1h20v16h-7l-3 4-3-4H1z" fill="#fff"/><path d="M4 5h14M4 9h14M4 13h9" stroke="#1c1c1c" stroke-width="1.500"/></svg><span class="absolute top-2 left-2 flex size-6 items-center justify-center rounded-full border border-[#999] bg-[#2b2b2b] text-sm font-semibold">23</span></button>
            <i class="ml-[26px] h-full w-px bg-[#666]"></i>
        </div>
    </footer>

    <!-- Time tracker overlay -->
    <div class="absolute right-[19px] bottom-[101px] flex w-[200px] flex-col bg-[#4f4f4f]/98 px-[5px] pt-1 pb-[3px] text-white">
        <button class="ml-auto h-[26px] bg-[#5a5a5a] px-[3px]">Open App <svg class="inline size-2.5" viewBox="0 0 10 10" stroke="#fff" fill="#fff"><path d="M1 9l6-6M5 2h3v3z"/></svg></button>
        <div class="mt-2 h-[33px] bg-[#7cc8d2] pl-3 font-bold leading-[34px]">Working Status: Active</div>
        <div class="mt-[3px] h-[33px] bg-[#5fd890] pl-3 font-bold leading-[34px]">Active: 02:50:26</div>
    </div>

    <script>
        // [name, level, arrow, count, style]
        const folders = [
            ['blyon@vcloudchoice.com', 0, 'down', '', 'account'],
            ['Inbox', 0, 'down'],
            ['Catalog', 1],
            ['MAP', 1],
            ['Rewards', 1],
            ['Stock Reservation', 1, '', '672'],
            ['Drafts', 0, '', '[19]'],
            ['Sent Items', 0, '', '', 'active'],
            ['Deleted Items', 0, 'right', '908'],
            ['Archive', 0],
            ['Conversation History', 0, 'right'],
            ['Junk Email', 0, '', '[1]'],
            ['Outbox', 0, '', '[1]'],
            ['RSS Feeds', 0],
            ['Search Folders', 0],
            ['Groups', 0, 'right', '', 'group'],
            ['returns@vcloudchoice.com', 0, 'down', '', 'returns'],
            ['Inbox', 0, 'down']
        ];
        const folderStyles = {
            account: 'text-[17px] text-[#262626]',
            active: 'bg-[#e1e1e1] font-bold text-[#1c1c1c]',
            group: 'mt-2.5 font-semibold text-[#262626]',
            returns: 'mt-10 text-[17px] text-[#262626]'
        };
        document.getElementById('folders').innerHTML = folders.map(([name, level, arrow, count, style]) => `
            <a href="#" class="mr-[26px] flex h-[30px] items-center pr-3 ${folderStyles[style] || 'text-[#444]'}">
                <span class="flex w-5 shrink-0 items-center justify-end pr-[3px] ${level ? 'mr-[9px]' : ''}">
                    ${arrow ? `<svg class="${arrow === 'right' ? 'size-[11px] -rotate-90' : 'size-[13px]'}"><use href="#chevWide"/></svg>` : ''}
                </span>
                ${name}
                <span class="ml-auto text-[#2b62a8] ${/^\d/.test(count) ? 'text-[15px] font-bold' : ''}">${count || ''}</span>
            </a>`).join('');

        const rowTop = [
            ['download', 'Dow...'], ['edge', 'Ama...'], ['excel', '1000...'], ['excel', 'orde...'],
            ['excel', 'Wh ...'], ['excel', 'NA-...'], ['chromeB', 'Dash...'], ['chromeB', 'Cybe...'],
            ['chromeB', 'Sign ...'], ['chromeB', 'HP C...'], ['chromeSmallB', 'Ama...'], ['chromeSmallB', 'oms....'],
            ['chromeR', 'Sign ...'], ['chromeR', 'Sear...'], ['envelope', 'FW: ...'], ['envelope', 'RE: [...']
        ];
        const rowBottom = [
            ['envelope', 'RE: Lat...'], ['envelope', 'Re: PR...'], ['envelope', 'RE: AS...'], ['envelope', 'ScanS...'],
            ['envelope', 'RE: [EX...'], ['outlook', 'Sent It...'], ['envelope', 'FW: D...'], ['envelope', 'RE: Ge...'],
            ['zoomapp', 'Zoom ...'], ['calc', 'Calcul...'], ['pdf', 'Standa...'], ['notepad', '*Untitl...'],
            ['teamsapp', 'Chat | ...'], ['teamsapp', 'Custo...']
        ];
        const taskButton = ([icon, text]) => {
            const active = text === 'Sent It...';
            return `
            <button class="flex min-w-0 flex-col ${active ? 'bg-[#4a4a4a]' : 'px-[5px]'}">
                <span class="flex w-full flex-1 items-center gap-[5px] pt-0.5 whitespace-nowrap ${active ? 'pl-[7px]' : 'pl-[3px]'}">
                    <svg class="size-[30px] shrink-0"><use href="#${icon}"/></svg>${text}
                </span>
                <i class="h-[3px] w-full bg-[#7db4e2]"></i>
            </button>`;
        };
        document.getElementById('rowTop').innerHTML = rowTop.map(taskButton).join('');
        document.getElementById('rowBottom').innerHTML = rowBottom.map(taskButton).join('');
    </script>
</body>
</html>
